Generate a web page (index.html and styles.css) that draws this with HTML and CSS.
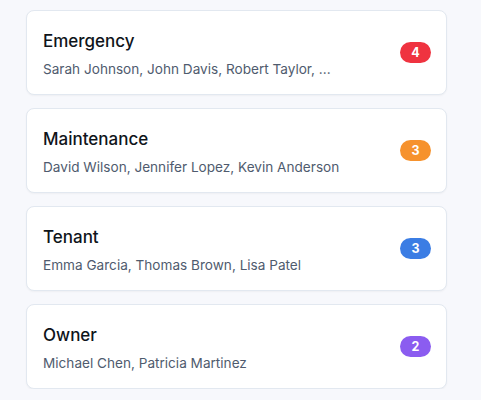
FILE: index.html
```html
<!DOCTYPE html>
<html>
<head>
<meta charset="utf-8">
<link rel="stylesheet" href="styles.css">
</head>
<body>
<div class="list">
  <div class="card">
    <div class="info">
      <div class="title">Emergency</div>
      <div class="names">Sarah Johnson, John Davis, Robert Taylor, ...</div>
    </div>
    <span class="badge red">4</span>
  </div>
  <div class="card">
    <div class="info">
      <div class="title">Maintenance</div>
      <div class="names">David Wilson, Jennifer Lopez, Kevin Anderson</div>
    </div>
    <span class="badge orange">3</span>
  </div>
  <div class="card">
    <div class="info">
      <div class="title">Tenant</div>
      <div class="names">Emma Garcia, Thomas Brown, Lisa Patel</div>
    </div>
    <span class="badge blue">3</span>
  </div>
  <div class="card">
    <div class="info">
      <div class="title">Owner</div>
      <div class="names">Michael Chen, Patricia Martinez</div>
    </div>
    <span class="badge purple">2</span>
  </div>
</div>
</body>
</html>
```

FILE: styles.css
```css
html, body {
  margin: 0;
  padding: 0;
  background: #f7f8fc;
  font-family: Inter, "Noto Sans", sans-serif;
}
.list {
  display: flex;
  flex-direction: column;
  gap: 13px;
  padding: 10px 34px 0 26px;
}
.card {
  display: flex;
  align-items: center;
  justify-content: space-between;
  height: 85px;
  box-sizing: border-box;
  padding: 0 15px 0 16px;
  background: #fff;
  border: 1px solid #e2e8f0;
  border-radius: 8px;
  box-shadow: 0 1px 2px rgba(0,0,0,0.04);
}
.info {
  display: flex;
  flex-direction: column;
  gap: 8px;
  margin-top: 3px;
}
.title {
  font-size: 17px;
  font-weight: 500;
  color: #0f141a;
  line-height: 22px;
}
.names {
  font-size: 13.6px;
  color: #4f5b6e;
  line-height: 18px;
}
.badge {
  display: inline-flex;
  align-items: center;
  justify-content: center;
  width: 31px;
  height: 21px;
  border-radius: 11px;
  color: #fff;
  font-size: 12.5px;
  font-weight: 700;
}
.red { background: #ef3340; }
.orange { background: #f6922d; }
.blue { background: #3b7de4; }
.purple { background: #8b5cf0; }
```
